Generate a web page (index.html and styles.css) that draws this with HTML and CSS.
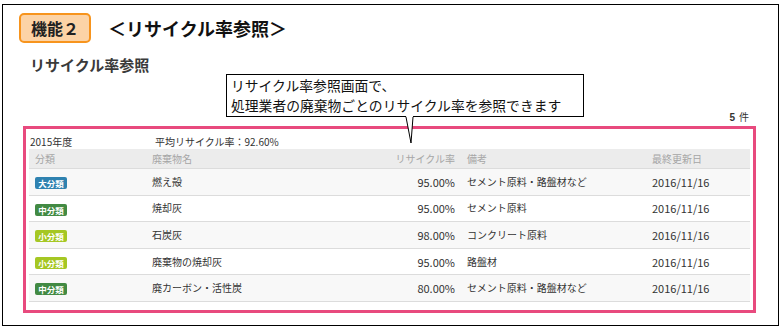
FILE: index.html
```html
<!DOCTYPE html>
<html lang="ja">
<head>
<meta charset="utf-8">
<title>機能2 リサイクル率参照</title>
<link rel="stylesheet" href="styles.css">
</head>
<body>
<div class="frame">
  <div class="head">
    <div class="badge">機能２</div>
    <h1 class="title">＜リサイクル率参照＞</h1>
  </div>
  <h2 class="subtitle">リサイクル率参照</h2>
  <div class="count"><b>5</b><span class="unit">件</span></div>
  <div class="panel">
    <div class="summary">
      <span class="year">2015年度</span>
      <span class="avg">平均リサイクル率：92.60%</span>
    </div>
    <table class="grid">
      <colgroup>
        <col class="c1"><col class="c2"><col class="c3"><col class="c4"><col class="c5">
      </colgroup>
      <thead>
        <tr><th>分類</th><th>廃棄物名</th><th class="num">リサイクル率</th><th>備考</th><th>最終更新日</th></tr>
      </thead>
      <tbody>
        <tr><td><span class="tag tag-l">大分類</span></td><td>燃え殻</td><td class="num">95.00%</td><td>セメント原料・路盤材など</td><td class="date">2016/11/16</td></tr>
        <tr><td><span class="tag tag-m">中分類</span></td><td>焼却灰</td><td class="num">95.00%</td><td>セメント原料</td><td class="date">2016/11/16</td></tr>
        <tr><td><span class="tag tag-s">小分類</span></td><td>石炭灰</td><td class="num">98.00%</td><td>コンクリート原料</td><td class="date">2016/11/16</td></tr>
        <tr><td><span class="tag tag-s">小分類</span></td><td>廃棄物の焼却灰</td><td class="num">95.00%</td><td>路盤材</td><td class="date">2016/11/16</td></tr>
        <tr><td><span class="tag tag-m">中分類</span></td><td>廃カーボン・活性炭</td><td class="num">80.00%</td><td>セメント原料・路盤材など</td><td class="date">2016/11/16</td></tr>
      </tbody>
    </table>
  </div>
  <div class="callout">
    <p class="callout-line">リサイクル率参照画面で、</p>
    <p class="callout-line">処理業者の廃棄物ごとのリサイクル率を参照できます</p>
  </div>
  <svg class="tail" width="12" height="28" viewBox="0 0 12 28" aria-hidden="true">
    <polygon points="2,0 9,0 7,27" fill="#fff"/>
    <polyline points="2,1 7,27 9,1" fill="none" stroke="#000" stroke-width="1"/>
  </svg>
</div>
</body>
</html>
```
FILE: styles.css
```css
html, body {
  margin: 0;
  padding: 0;
  background: #fff;
}
body {
  font-family: "Noto Sans CJK JP", sans-serif;
  color: #333;
}
.frame {
  position: relative;
  box-sizing: border-box;
  margin: 4px 0 0 2px;
  width: 777px;
  height: 322px;
  border: 1px solid #000;
  padding: 8px 0 0 16px;
}
.head {
  display: flex;
  align-items: center;
  gap: 17px;
}
.badge {
  box-sizing: border-box;
  width: 72px;
  height: 30px;
  border: 2px solid #f7941d;
  border-radius: 5px;
  background: #fcd3a6;
  font-size: 16px;
  font-weight: bold;
  color: #222;
  line-height: 26px;
  padding-left: 10px;
}
.title {
  margin: 0;
  font-size: 18px;
  font-weight: bold;
  color: #111;
  line-height: 26px;
}
.subtitle {
  margin: 12px 0 0 11px;
  font-size: 15px;
  font-weight: bold;
  color: #3a3a3a;
  line-height: 20px;
}
.count {
  margin: 35px 29px 0 0;
  text-align: right;
  font-size: 10px;
  line-height: 14px;
  color: #333;
}
.count b {
  font-family: "Liberation Sans", sans-serif;
  font-size: 10px;
}
.unit {
  margin-left: 4px;
}
.panel {
  box-sizing: border-box;
  margin: 1px 0 0 4px;
  width: 733px;
  height: 187px;
  border: 3px solid #e84a7e;
  padding: 0 3px 0 3px;
}
.summary {
  display: flex;
  height: 20px;
  align-items: flex-end;
  font-size: 10px;
  line-height: 14px;
  color: #333;
}
.year {
  width: 125px;
  padding-left: 1px;
}
.grid {
  width: 721px;
  border-collapse: collapse;
  table-layout: fixed;
  font-size: 10px;
}
.c1 { width: 117px; }
.c2 { width: 234px; }
.c3 { width: 81px; }
.c4 { width: 185px; }
.c5 { width: 104px; }
.grid th {
  background: #ececec;
  color: #a6a6a6;
  font-weight: normal;
  text-align: left;
  height: 19px;
  padding: 0 6px;
  line-height: 14px;
}
.grid td {
  height: 25.6px;
  padding: 0 6px;
  border-top: 1px solid #dcdcdc;
  line-height: 14px;
  color: #333;
  white-space: nowrap;
}
.grid tbody tr:nth-child(odd) td {
  background: #f8f8f8;
}
.grid tbody tr:last-child td {
  border-bottom: 1px solid #dcdcdc;
}
.grid .num {
  text-align: right;
}
.grid td.num, .grid td.date {
  font-size: 11px;
}
.tag {
  display: inline-block;
  width: 32px;
  height: 12px;
  border-radius: 2px;
  color: #fff;
  font-size: 8.5px;
  font-weight: bold;
  line-height: 12px;
  text-align: center;
  vertical-align: middle;
}
.tag-l { background: #2f82b0; }
.tag-m { background: #428a43; }
.tag-s { background: #a5c723; }
.callout {
  position: absolute;
  left: 223px;
  top: 69px;
  box-sizing: border-box;
  width: 358px;
  height: 43px;
  border: 1px solid #000;
  background: #fff;
  padding: 0 0 0 4px;
  font-size: 13.8px;
  color: #111;
}
.callout-line {
  margin: 0;
  line-height: 20px;
}
.tail {
  position: absolute;
  left: 401px;
  top: 111px;
  overflow: visible;
}
```
